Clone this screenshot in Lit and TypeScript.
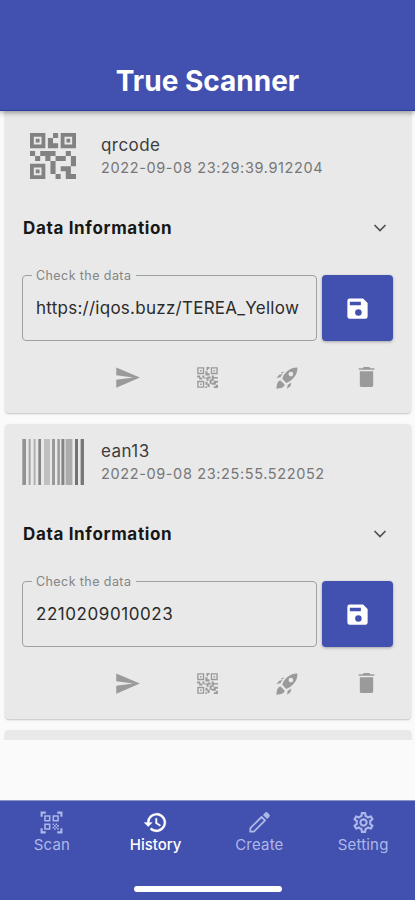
import { LitElement, html, svg, css, nothing } from "lit";
import { customElement, property } from "lit/decorators.js";
import { classMap } from "lit/directives/class-map.js";

const qrBig = "M15,21h-2v-2h2V21z M13,14h-2v5h2V14z M21,12h-2v4h2V12z M19,10h-2v2h2V10z M7,12H5v2h2V12z M5,10H3v2h2V10z M12,5h2V3h-2V5z M4.5,4.5v3h3v-3H4.5z M9,9H3V3h6V9z M4.5,16.5v3h3v-3H4.5z M9,21H3v-6h6V21z M16.5,4.5v3h3v-3H16.5z M21,9h-6V3h6V9z M19,19v-3l-4,0v2h2v3h4v-2H19z M17,12l-4,0v2h4V12z M13,10H7v2h2v2h2v-2h2V10z M14,9V7h-2V5h-2v4L14,9z M6.75,5.25h-1.5v1.5h1.5V5.25z M6.75,17.25h-1.5v1.5h1.5V17.25z M18.75,5.25h-1.5v1.5h1.5V5.25z";

// [x, width, grey level] for each bar of the symbol
const bars: [number, number, string][] = [
  [0.3, 3.7, "#929292"], [6.6, 2, "#a6a6a6"], [11.6, 2, "#b0b0b0"], [16.3, 2.7, "#868686"],
  [22, 6, "#c0c0c0"], [30, 3, "#999"], [35.4, 2.4, "#989898"], [39.4, 3, "#858585"],
  [43.6, 6.8, "#acacac"], [53, 3, "#737373"], [58.6, 3.4, "#787878"],
];

const icons: Record<string, unknown> = {
  send: svg`<path fill="currentColor" d="M2.01 21 23 12 2.01 3 2 10l15 2-15 2z"/>`,
  rocket: svg`<path fill="currentColor" fill-rule="evenodd" d="M21.6 2.3C16.5 2 12 5.1 9 9.2L7.6 12.8l3.7 3.7 3.6-1.7c4.1-3 7-7.3 6.7-12.5zM15.6 6.2a2.2 2.2 0 1 1 0 4.4 2.2 2.2 0 0 1 0-4.4zM7.8 8.2 4.8 8.9 2.3 12.1l3.6-.7zM16 16.2l-3.3 2-.7 3.7 3.2-2.4zM9.3 6.1l-2.4.5-.5 1h1.8zM6 14.2c-2.7.4-3.4 3-3.8 7.8 4.6-.5 7.4-1.2 7.6-3.9z"/>`,
  trash: svg`<path fill="currentColor" d="M5.6 6.100h12.800v13.300a1.800 1.800 0 0 1-1.800 1.800H7.400a1.800 1.800 0 0 1-1.800-1.800zM19.500 3v1.600H4.500V3h4l.8-1h5.400l.8 1z"/>`,
  chevron: svg`<path fill="none" stroke="currentColor" stroke-width="1.700" d="M6.500 9l5.500 5.500L17.500 9"/>`,
  save: svg`<path fill="currentColor" fill-rule="evenodd" d="M17 3H5a2 2 0 0 0-2 2v14a2 2 0 0 0 2 2h14a2 2 0 0 0 2-2V7zM12.800 18.500a2.900 2.900 0 1 1 0-5.800 2.900 2.900 0 0 1 0 5.800zM15 9H5.200V6H15z"/>`,
  qr: svg`<path fill="none" stroke="currentColor" stroke-width="1.300" d="M2.800 2.800h5.400v5.400H2.800zM15.800 2.800h5.400v5.400h-5.400zM2.800 15.800h5.400v5.400H2.800z"/><path fill="currentColor" d="M11 2h3v1.500h-1.500V5H11zM10 6h2v2h2v2h-4zM2 10h3v2h2v2H4v-2H2zM7 10h2v2h3v-1h3v2h-2v2h-2v-2H8v-1H7zM16 10h2v1.500h4V13h-4v2h-2zM10 16h2v2h2v3h-2v-2h-2zM14 14h2v3h2v2h-2v-1h-2zM18 15h4v2h-2v2h-2zM20 19h2v3h-4v-1.500h2zM10 20.500h1.500V22H10zM4.800 4.800h1.500v1.500H4.800zM17.800 4.800h1.500v1.500h-1.500zM4.800 17.800h1.500v1.500H4.800z"/>`,
  scan: svg`<path fill="currentColor" d="M9.500 6.500v3h-3v-3h3M11 5H5v6h6V5zm-1.500 9.500v3h-3v-3h3M11 13H5v6h6v-6zm6.500-6.500v3h-3v-3h3M19 5h-6v6h6V5zm-6 8h1.500v1.500H13V13zm1.500 1.500H16V16h-1.500v-1.500zM16 13h1.500v1.500H16V13zm-3 3h1.500v1.500H13V16zm1.500 1.500H16V19h-1.500v-1.500zM16 16h1.500v1.500H16V16zm1.500-1.500H19V16h-1.500v-1.500zm0 3H19V19h-1.500v-1.500zM22.500 6.500h-2V3.500h-3v-2h5v5zm0 16v-5h-2v3h-3v2h5zM1.500 22.500h5v-2h-3v-3h-2v5zM1.500 1.500v5h2v-3h3v-2h-5z"/>`,
  history: svg`<path fill="currentColor" stroke="currentColor" stroke-width=".3" d="M13 3a9 9 0 0 0-9 9H1l3.890 3.890.070.140L9 12H6a7 7 0 1 1 2.060 4.940l-1.420 1.420A9 9 0 1 0 13 3zm-1 5v5l4.280 2.540.720-1.210-3.500-2.080V8z"/>`,
  edit: svg`<path fill="none" stroke="currentColor" stroke-width="1.800" stroke-linejoin="round" d="M3.200 17.400v3.400h3.400L17.300 10 14 6.700z"/><path fill="currentColor" d="m15.300 4.700 4 4 2.200-2.200a1.500 1.500 0 0 0 0-2.100l-1.900-1.900a1.500 1.500 0 0 0-2.100 0z"/>`,
  gear: svg`<path fill="currentColor" d="M19.430 12.980c.040-.320.070-.640.070-.980s-.030-.660-.070-.980l2.110-1.650c.190-.150.240-.420.120-.640l-2-3.460c-.090-.160-.260-.250-.440-.250-.060 0-.120.010-.170.030l-2.490 1c-.520-.400-1.080-.730-1.690-.980l-.380-2.650C14.460 2.180 14.250 2 14 2h-4c-.250 0-.460.180-.490.420l-.380 2.650c-.610.250-1.170.590-1.690.980l-2.490-1c-.060-.020-.120-.030-.180-.030-.170 0-.340.090-.430.250l-2 3.460c-.130.220-.070.490.120.640l2.110 1.650c-.040.320-.070.650-.070.980s.030.660.070.980l-2.110 1.650c-.190.150-.240.420-.120.640l2 3.460c.090.160.260.250.440.250.060 0 .120-.010.170-.030l2.490-1c.520.400 1.080.730 1.690.980l.380 2.650c.030.240.240.420.490.420h4c.250 0 .460-.180.490-.420l.380-2.650c.610-.250 1.170-.590 1.690-.980l2.490 1c.060.020.120.030.180.030.170 0 .340-.090.430-.250l2-3.460c.120-.220.070-.490-.120-.640l-2.110-1.650zm-1.980-1.710c.040.310.050.520.050.730s-.020.430-.050.730l-.140 1.130.890.700 1.080.840-.700 1.210-1.270-.510-1.040-.420-.900.680c-.430.320-.840.560-1.250.730l-1.060.430-.160 1.130-.200 1.350h-1.400l-.190-1.350-.160-1.130-1.060-.430c-.430-.180-.830-.410-1.230-.710l-.910-.700-1.060.430-1.270.510-.700-1.210 1.080-.840.890-.700-.140-1.130c-.030-.310-.050-.540-.050-.740s.020-.430.050-.730l.140-1.130-.890-.700-1.080-.840.700-1.210 1.270.510 1.040.420.900-.680c.430-.320.840-.560 1.250-.730l1.060-.430.160-1.130.200-1.350h1.390l.190 1.350.160 1.130 1.060.430c.430.180.830.410 1.230.710l.910.700 1.060-.430 1.270-.510.700 1.210-1.070.850-.890.700.140 1.130zM12 8a4 4 0 1 0 0 8 4 4 0 0 0 0-8zm0 6a2 2 0 1 1 0-4 2 2 0 0 1 0 4z"/>`,
};

const icon = (name: string, size = 25) =>
  html`<svg width=${size} height=${size} viewBox="0 0 24 24">${icons[name]}</svg>`;

@customElement("scan-card")
class ScanCard extends LitElement {
  @property() kind = "";
  @property() time = "";
  @property() value = "";

  static styles = css`
    :host { display: block; height: 295px; box-sizing: border-box; background: #e9e9e9; border-radius: 4px; padding: 0 18px 0 17px; box-shadow: 0 1px 2px rgba(0, 0, 0, 0.22); color: #2b2b2b; }
    svg { display: block; }
    .head { display: flex; height: 75px; align-items: center; }
    .thumb { width: 62px; display: flex; justify-content: center; margin-right: 17px; color: #828282; }
    .meta { display: flex; flex-direction: column; white-space: nowrap; padding-top: 2px; }
    .kind { font-size: 17px; line-height: 23px; letter-spacing: 0.45px; color: #3c3c3c; }
    .time { font-size: 14.5px; line-height: 22px; letter-spacing: 0.62px; color: #777; }
    .section { display: flex; height: 70px; align-items: center; justify-content: space-between; padding: 0 1px; }
    .label { font-size: 17px; font-weight: 700; letter-spacing: 0.66px; color: #171717; }
    .section svg { color: #505050; }
    .form { display: flex; height: 66px; gap: 5px; margin-top: 12px; }
    .field { box-sizing: border-box; width: 295px; height: 66px; margin: 0; border: 1px solid #a0a0a0; border-radius: 4px; padding: 0 13px 1px; display: flex; align-items: center; position: relative; font-size: 17px; letter-spacing: 0.26px; white-space: nowrap; }
    .numeric { letter-spacing: 0.56px; }
    .caption { position: absolute; left: 9px; top: -8px; line-height: 16px; font-size: 12.5px; letter-spacing: 0.42px; color: #858585; background: #e9e9e9; padding: 0 5px 0 4px; }
    .save { width: 71px; height: 66px; box-sizing: border-box; padding: 0; border: 0; border-radius: 4px; background: #4250af; color: #fff; display: flex; align-items: center; justify-content: center; box-shadow: 0 1px 3px rgba(0, 0, 0, 0.3); }
    .actions { display: flex; justify-content: space-between; align-items: center; padding: 23px 14px 0 92px; color: #9a9a9a; }
  `;

  render() {
    if (!this.kind) return nothing;
    return html`
      <div class="head">
        <div class="thumb">
          ${this.kind === "qrcode"
            ? html`<svg width="46" height="46" viewBox="3 3 18 18"><path fill="currentColor" d=${qrBig} /></svg>`
            : html`<svg width="62" height="46" viewBox="0 0 62 46">${bars.map(([x, w, c]) => svg`<rect x=${x} width=${w} height="46" fill=${c} />`)}</svg>`}
        </div>
        <div class="meta"><span class="kind">${this.kind}</span><span class="time">${this.time}</span></div>
      </div>
      <div class="section"><span class="label">Data Information</span>${icon("chevron", 24)}</div>
      <div class="form">
        <div class=${classMap({ field: true, numeric: /^\d+$/.test(this.value) })}><span class="caption">Check the data</span>${this.value}</div>
        <button class="save">${icon("save", 27)}</button>
      </div>
      <div class="actions">${icon("send", 27)}${icon("qr")}${icon("rocket", 26)}${icon("trash")}</div>
    `;
  }
}

@customElement("app-root")
class AppRoot extends LitElement {
  static styles = css`
    :host { display: flex; flex-direction: column; height: 900px; overflow: hidden; background: #fafafa; font-family: Inter, "Liberation Sans", sans-serif; }
    header { flex: none; height: 111px; box-sizing: border-box; padding-top: 50px; background: #4250af; border-bottom: 1px solid #2b3d9c; color: #fff; font-size: 28px; line-height: 62px; font-weight: 700; text-align: center; z-index: 1; box-shadow: 0 2px 5px rgba(0, 0, 0, 0.35); }
    main { flex: none; height: 629px; overflow: hidden; display: flex; flex-direction: column; gap: 11px; padding: 0 4px 0 5px; box-sizing: border-box; }
    scan-card { flex: none; }
    .first { height: 302px; padding-top: 7px; border-radius: 0 0 4px 4px; }
    nav { margin-top: auto; height: 100px; border-top: 1px solid #8d95c8; box-sizing: border-box; background: #4250af; display: flex; flex-direction: column; align-items: center; }
    .tabs { display: flex; width: 100%; height: 85px; }
    .tab { flex: 1; display: flex; flex-direction: column; align-items: center; padding-top: 9px; color: #acb8e8; font-size: 15px; line-height: 20px; letter-spacing: 0.2px; }
    .tab svg { display: block; }
    .active { color: #fff; font-weight: 500; letter-spacing: 0; }
    .home { width: 148px; height: 6px; border-radius: 3px; background: #fff; }
  `;

  render() {
    return html`
      <header>True Scanner</header>
      <main>
        <scan-card class="first" kind="qrcode" time="2022-09-08 23:29:39.912204" value="https://iqos.buzz/TEREA_Yellow"></scan-card>
        <scan-card kind="ean13" time="2022-09-08 23:25:55.522052" value="2210209010023"></scan-card>
        <scan-card></scan-card>
      </main>
      <nav>
        <div class="tabs">
          <div class="tab">${icon("scan")}<span>Scan</span></div>
          <div class="tab active">${icon("history")}<span>History</span></div>
          <div class="tab">${icon("edit")}<span>Create</span></div>
          <div class="tab">${icon("gear")}<span>Setting</span></div>
        </div>
        <div class="home"></div>
      </nav>
    `;
  }
}
